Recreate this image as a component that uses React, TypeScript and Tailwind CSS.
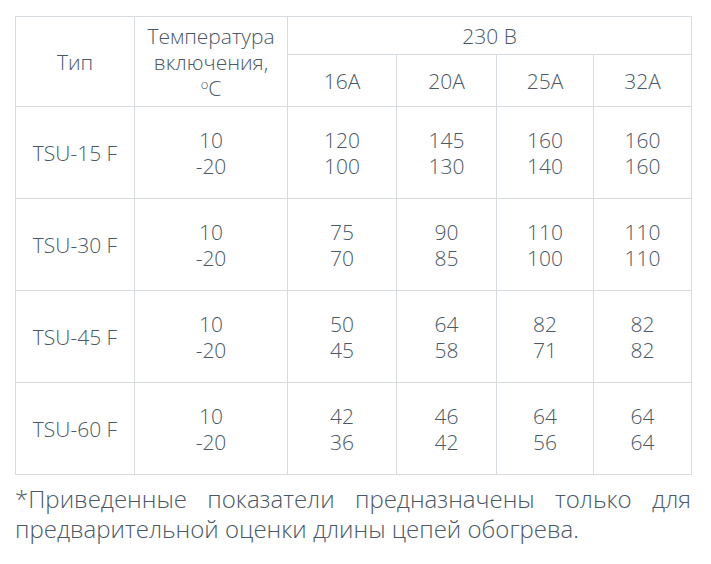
const rows = [
  { type: 'TSU-15 F', values: [['120', '100'], ['145', '130'], ['160', '140'], ['160', '160']] },
  { type: 'TSU-30 F', values: [['75', '70'], ['90', '85'], ['110', '100'], ['110', '110']] },
  { type: 'TSU-45 F', values: [['50', '45'], ['64', '58'], ['82', '71'], ['82', '82']] },
  { type: 'TSU-60 F', values: [['42', '36'], ['46', '42'], ['64', '56'], ['64', '64']] }
];

const currents = ['16А', '20А', '25А', '32А'];

const cell = 'border border-[#d6dcdf] text-center align-middle p-0 font-light';

export default function App() {
  return (
    <div
      className="min-h-[564px] w-[711px] bg-white pt-4 pl-[15px] text-[21px] leading-[26px] text-[#4a5866] font-light"
      style={{ fontFamily: '"Open Sans", "Noto Sans", sans-serif' }}
    >
      <table className="w-[676px] table-fixed border-collapse">
        <colgroup>
          <col className="w-[119px]" />
          <col className="w-[153px]" />
          <col className="w-[109px]" />
          <col className="w-[100px]" />
          <col className="w-[97px]" />
          <col className="w-[98px]" />
        </colgroup>
        <thead>
          <tr className="h-[38px]">
            <th rowSpan={2} className={cell}>
              Тип
            </th>
            <th rowSpan={2} className={cell}>
              Температура
              <br />
              включения,
              <br />
              <sup className="text-[13px]">o</sup>C
            </th>
            <th colSpan={4} className={cell}>
              230 В
            </th>
          </tr>
          <tr className="h-[52px]">
            {currents.map((c) => (
              <th key={c} className={cell}>
                {c}
              </th>
            ))}
          </tr>
        </thead>
        <tbody>
          {rows.map((row) => (
            <tr key={row.type} className="h-[92px]">
              <td className={cell}>{row.type}</td>
              <td className={cell}>
                10
                <br />
                -20
              </td>
              {row.values.map(([a, b], i) => (
                <td key={i} className={cell}>
                  {a}
                  <br />
                  {b}
                </td>
              ))}
            </tr>
          ))}
        </tbody>
      </table>
      <p className="mt-[9px] w-[676px] text-justify text-[24px] leading-[30px]">
        *Приведенные показатели предназначены только для предварительной оценки длины цепей обогрева.
      </p>
    </div>
  );
}
